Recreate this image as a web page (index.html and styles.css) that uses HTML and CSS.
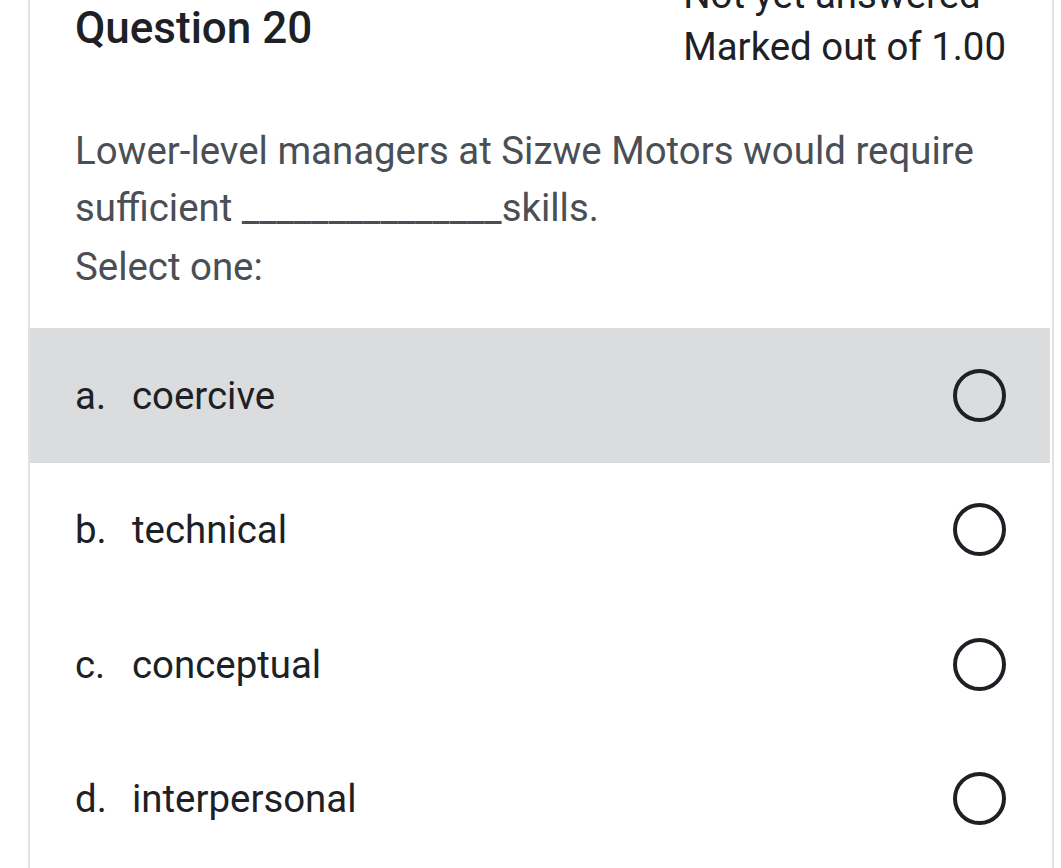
FILE: index.html
```html
<!DOCTYPE html>
<html lang="en">
<head>
<meta charset="utf-8">
<title>Question 20</title>
<link rel="stylesheet" href="styles.css">
</head>
<body>
<div class="que">
  <div class="info">
    <h3 class="qno">Question 20</h3>
    <div class="state">
      <div>Not yet answered</div>
      <div>Marked out of 1.00</div>
    </div>
  </div>
  <div class="content">
    <p class="qtext">Lower-level managers at Sizwe Motors would require sufficient _______________skills.</p>
    <p class="prompt">Select one:</p>
  </div>
  <div class="answer">
    <label class="opt active"><span class="letter">a.</span><span class="label">coercive</span><span class="radio"></span></label>
    <label class="opt"><span class="letter">b.</span><span class="label">technical</span><span class="radio"></span></label>
    <label class="opt"><span class="letter">c.</span><span class="label">conceptual</span><span class="radio"></span></label>
    <label class="opt"><span class="letter">d.</span><span class="label">interpersonal</span><span class="radio"></span></label>
  </div>
</div>
</body>
</html>
```
FILE: styles.css
```css
html, body {
  margin: 0;
  padding: 0;
  background: #ffffff;
  overflow: hidden;
}
body {
  font-family: Roboto, "Liberation Sans", sans-serif;
  color: #1d2125;
}
.que {
  margin-left: 28px;
  width: 1022px;
  border-left: 2px solid #e2e2e2;
  border-right: 2px solid #e2e2e2;
  min-height: 900px;
}
.info {
  display: flex;
  justify-content: space-between;
  align-items: flex-start;
  margin-top: -31px;
  padding: 0 46px 0 45px;
}
.qno {
  margin: 0;
  padding-top: 38px;
  font-size: 44px;
  font-weight: 500;
  line-height: 42px;
  color: #1d2125;
}
.state {
  font-size: 38.4px;
  line-height: 52px;
  color: #1d2125;
}
.content {
  padding: 49px 46px 0 45px;
  color: #4a4f55;
  font-size: 38.4px;
}
.qtext {
  margin: 0;
  line-height: 57px;
}
.prompt {
  margin: 2px 0 0;
  line-height: 57px;
}
.answer {
  margin-top: 33px;
  margin-right: 2px;
}
.opt {
  display: flex;
  align-items: center;
  height: 134.5px;
  padding: 0 44px 0 45px;
  font-size: 38.4px;
  color: #1d2125;
}
.opt.active {
  background: #dbdcdd;
}
.letter {
  width: 57px;
  flex: none;
}
.label {
  flex: 1;
}
.radio {
  width: 45px;
  height: 45px;
  border: 4.5px solid #1d2125;
  border-radius: 50%;
  flex: none;
}
```
